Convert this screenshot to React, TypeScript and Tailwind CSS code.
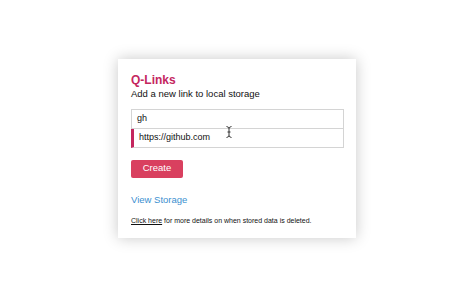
import React from "react";

const App = () => {
  return (
    <div
      className="flex h-[296px] w-[474px] items-center justify-center bg-white"
      style={{ fontFamily: '"Liberation Sans", Arial, sans-serif' }}
    >
      <div className="w-[238px] bg-white px-[13px] pt-[14px] pb-[13px] shadow-[0_0_14px_rgba(0,0,0,0.22)]">
        <h1 className="text-[12px] font-bold leading-[14px] text-[#c4265e]">Q-Links</h1>
        <p className="mt-[1px] text-[9.5px] leading-[12px] text-[#111]">Add a new link to local storage</p>

        <div className="relative mt-[9px] w-[213px]">
          <div className="flex h-[20px] items-center border border-[#d4d4d4] px-[5px] text-[9px] text-[#111]">
            gh
          </div>
          <div className="flex h-[19px] items-center border border-t-0 border-l-[3px] border-[#d4d4d4] border-l-[#c4265e] px-[5px] text-[9px] text-[#111]">
            https://github.com
          </div>
          <svg
            className="absolute left-[95px] top-[17px]"
            width="6"
            height="12"
            viewBox="0 0 6 12"
            fill="none"
            stroke="#333"
            strokeWidth="1"
          >
            <path d="M0.5 0.5 Q3 1 3 2.5 V9.5 Q3 11 0.5 11.5 M5.5 0.5 Q3 1 3 2.5 M3 9.5 Q3 11 5.5 11.5 M1.5 6 H4.5" />
          </svg>
        </div>

        <button className="mt-[12px] flex h-[18px] w-[52px] items-center justify-center rounded-[2px] bg-[#d9405f] text-[9.5px] text-white">
          Create
        </button>

        <div className="mt-[16px] text-[9.5px] leading-[12px] text-[#3b8fd0]">View Storage</div>

        <p className="mt-[10px] text-[7px] leading-[9px] text-[#111]">
          <span className="underline">Click here</span> for more details on when stored data is deleted.
        </p>
      </div>
    </div>
  );
};

export default App;
